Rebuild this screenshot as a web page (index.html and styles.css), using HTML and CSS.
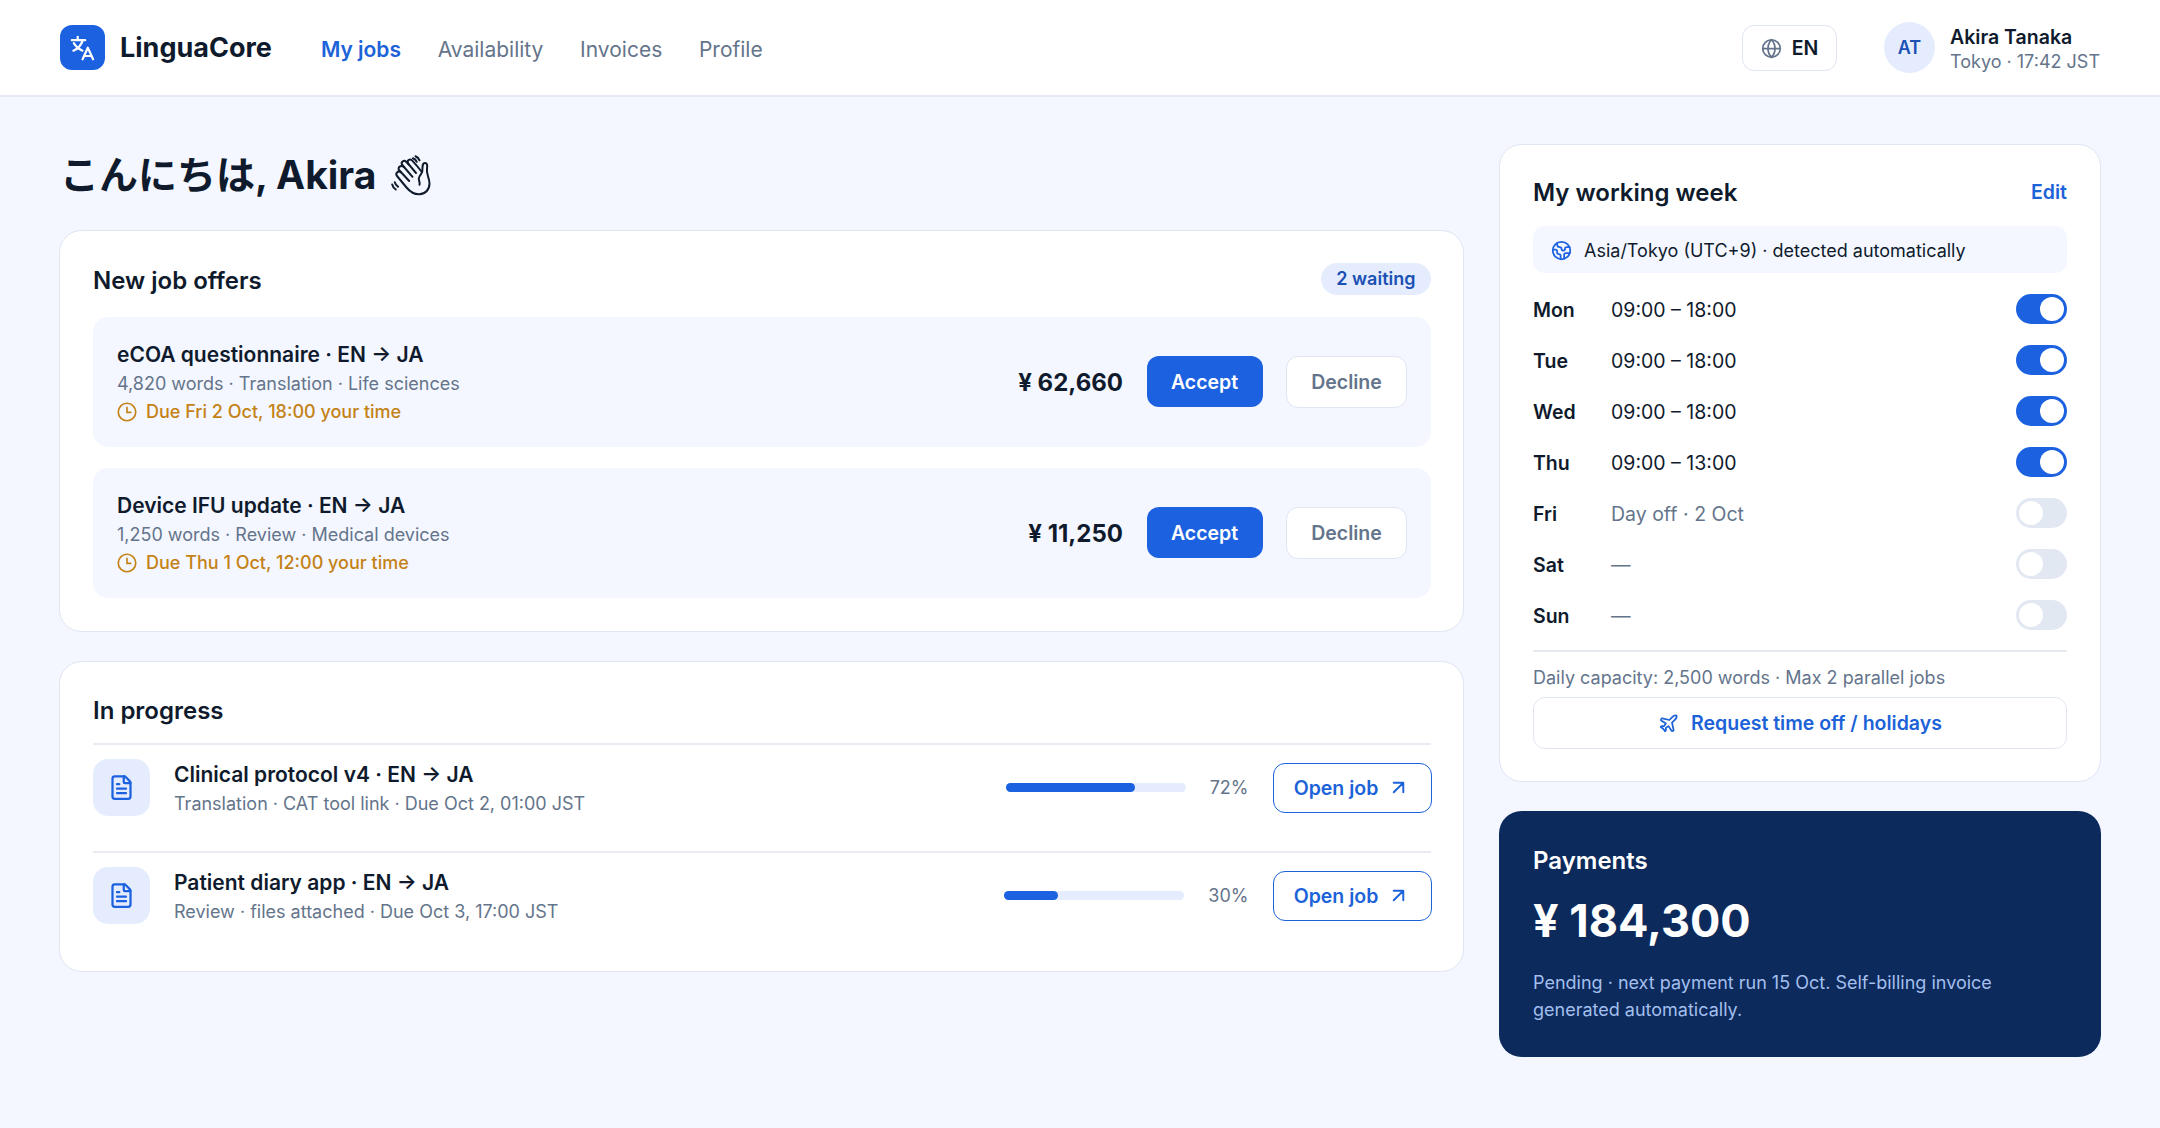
FILE: index.html
```html
<!DOCTYPE html>
<html lang="en">
  <head>
    <meta charset="UTF-8" />
    <meta name="viewport" content="width=device-width, initial-scale=1.0" />
    <title>LinguaCore - My jobs</title>
    <link rel="stylesheet" href="styles.css">
  </head>
  <body>
    <!-- shared icons -->
    <svg class="sprite" aria-hidden="true">
      <symbol id="icon-clock" viewBox="0 0 24 24">
        <circle cx="12" cy="12" r="10.5" />
        <path d="M12 6.5v6h4.5" />
      </symbol>
      <symbol id="icon-file" viewBox="0 0 24 24">
        <path d="M6 22a2 2 0 0 1-2-2V4a2 2 0 0 1 2-2h8a2.4 2.4 0 0 1 1.704.706l3.588 3.588A2.4 2.4 0 0 1 20 8v12a2 2 0 0 1-2 2z" />
        <path d="M14 2v5a1 1 0 0 0 1 1h5M10 9H8M16 13H8M16 17H8" />
      </symbol>
      <symbol id="icon-arrow" viewBox="0 0 24 24">
        <path d="M7 7h10v10M7 17 17 7" />
      </symbol>
    </svg>

    <header class="header">
      <div class="brand">
        <div class="logo">
          <svg viewBox="0 0 45 45">
            <path d="M17.7 11.8v2.6M11.8 15.2h13.4M22.6 15.6c-1.2 4-4.6 8-9.2 10.1M13.8 18.2c2 3.2 5 6 8.6 7.5M22.6 34.3l5.2-11.6 5.3 11.6M24.3 31h7" />
          </svg>
        </div>
        <span class="brand-name">LinguaCore</span>
      </div>
      <nav class="nav">
        <a class="active" href="#">My jobs</a>
        <a href="#">Availability</a>
        <a href="#">Invoices</a>
        <a href="#">Profile</a>
      </nav>
      <button class="lang" type="button">
        <svg class="icon" viewBox="0 0 24 24">
          <circle cx="12" cy="12" r="10" />
          <path d="M12 2a14.5 14.5 0 0 0 0 20 14.5 14.5 0 0 0 0-20M2 12h20" />
        </svg>
        <span>EN</span>
      </button>
      <div class="avatar">AT</div>
      <div class="user">
        <div class="user-name">Akira Tanaka</div>
        <div class="user-time">Tokyo · 17:42 JST</div>
      </div>
    </header>

    <main class="main">
      <div class="col-left">
        <h1 class="greeting">
          <span>こんにちは, Akira</span>
          <svg class="wave" viewBox="0 0 40 41">
            <path d="M30.8 17C27.5 12.5 24 8.5 21 5.4C18.8 3.2 15.3 5.6 17.2 8.6L25 18" />
            <path d="M18 9.7L15.2 6.7C12.8 4.4 9.3 7.2 11.3 10L21.5 21.8" />
            <path d="M13 12.1C10 9.5 6 12.2 8.2 15.3L18.2 26" />
            <path d="M10 17.3C7.5 15 3.8 18 6 21L15.5 32.5C19 36.6 23.5 39.5 28.5 39.3C34.5 39 38.5 34.5 38.5 28.5C38.5 23 35 19 36 13.5C36.6 9.8 36 7.9 34 7.9C31 7.9 31.6 12 31.3 16.5C31 19 28 20.5 27.8 23.5C27.7 26 29.2 27 28.5 29.8" />
            <path d="M24.5 1.2C26.5 2 27.8 3.4 28.5 5.3M22 3.3C23.7 3.9 25 5 25.7 6.8M1.2 29.5C1.7 31.6 2.9 33.3 4.8 34.5M3.8 27.3C4.3 29.2 5.4 30.7 7 31.7" />
          </svg>
        </h1>

        <section class="card offers">
          <div class="card-head">
            <h2>New job offers</h2>
            <span class="badge">2 waiting</span>
          </div>
          <div class="offer">
            <div class="info">
              <h3>eCOA questionnaire · EN → JA</h3>
              <p>4,820 words · Translation · Life sciences</p>
              <div class="due">
                <svg class="icon"><use href="#icon-clock" /></svg>
                <span>Due Fri 2 Oct, 18:00 your time</span>
              </div>
            </div>
            <span class="price">¥ 62,660</span>
            <button class="btn accept" type="button">Accept</button>
            <button class="btn decline" type="button">Decline</button>
          </div>
          <div class="offer">
            <div class="info">
              <h3>Device IFU update · EN → JA</h3>
              <p>1,250 words · Review · Medical devices</p>
              <div class="due">
                <svg class="icon"><use href="#icon-clock" /></svg>
                <span>Due Thu 1 Oct, 12:00 your time</span>
              </div>
            </div>
            <span class="price">¥ 11,250</span>
            <button class="btn accept" type="button">Accept</button>
            <button class="btn decline" type="button">Decline</button>
          </div>
        </section>

        <section class="card progress">
          <h2>In progress</h2>
          <div class="job">
            <div class="file"><svg class="icon"><use href="#icon-file" /></svg></div>
            <div class="info">
              <h3>Clinical protocol v4 · EN → JA</h3>
              <p>Translation · CAT tool link · Due Oct 2, 01:00 JST</p>
            </div>
            <div class="bar"><div class="fill" style="width: 72%"></div></div>
            <span class="percent">72%</span>
            <button class="btn open" type="button">
              <span>Open job</span>
              <svg class="icon"><use href="#icon-arrow" /></svg>
            </button>
          </div>
          <div class="job">
            <div class="file"><svg class="icon"><use href="#icon-file" /></svg></div>
            <div class="info">
              <h3>Patient diary app · EN → JA</h3>
              <p>Review · files attached · Due Oct 3, 17:00 JST</p>
            </div>
            <div class="bar"><div class="fill" style="width: 30%"></div></div>
            <span class="percent">30%</span>
            <button class="btn open" type="button">
              <span>Open job</span>
              <svg class="icon"><use href="#icon-arrow" /></svg>
            </button>
          </div>
        </section>
      </div>

      <div class="col-right">
        <section class="card week">
          <div class="card-head">
            <h2>My working week</h2>
            <a class="edit" href="#">Edit</a>
          </div>
          <div class="timezone">
            <svg class="icon" viewBox="0 0 24 24">
              <circle cx="12" cy="12" r="10" />
              <path d="M21.54 15H17a2 2 0 0 0-2 2v4.54M7 3.34V5a3 3 0 0 0 3 3 2 2 0 0 1 2 2c0 1.1.9 2 2 2a2 2 0 0 0 2-2c0-1.1.9-2 2-2h3.17M11 21.95V18a2 2 0 0 0-2-2 2 2 0 0 1-2-2v-1a2 2 0 0 0-2-2H2.05" />
            </svg>
            <span>Asia/Tokyo (UTC+9) · detected automatically</span>
          </div>
          <div class="days">
            <div class="day"><b>Mon</b><span>09:00 – 18:00</span><i class="toggle on"></i></div>
            <div class="day"><b>Tue</b><span>09:00 – 18:00</span><i class="toggle on"></i></div>
            <div class="day"><b>Wed</b><span>09:00 – 18:00</span><i class="toggle on"></i></div>
            <div class="day"><b>Thu</b><span>09:00 – 13:00</span><i class="toggle on"></i></div>
            <div class="day off"><b>Fri</b><span>Day off · 2 Oct</span><i class="toggle"></i></div>
            <div class="day off"><b>Sat</b><span>—</span><i class="toggle"></i></div>
            <div class="day off"><b>Sun</b><span>—</span><i class="toggle"></i></div>
          </div>
          <p class="capacity">Daily capacity: 2,500 words · Max 2 parallel jobs</p>
          <button class="btn request" type="button">
            <svg class="icon" viewBox="0 0 24 24">
              <path d="M17.8 19.2 16 11l3.5-3.5C21 6 21.5 4 21 3c-1-.5-3 0-4.5 1.5L13 8 4.8 6.2c-.5-.1-.9.1-1.1.5l-.3.5c-.2.5-.1 1 .3 1.3L9 12l-2 3H4l-1 1 3 2 2 3 1-1v-3l3-2 3.5 5.3c.3.4.8.5 1.3.3l.5-.2c.4-.3.6-.7.5-1.2z" />
            </svg>
            <span>Request time off / holidays</span>
          </button>
        </section>

        <section class="payments">
          <h2>Payments</h2>
          <div class="amount">¥ 184,300</div>
          <p>Pending · next payment run 15 Oct. Self-billing invoice generated automatically.</p>
        </section>
      </div>
    </main>
  </body>
</html>
```

FILE: styles.css
```css
* {
  box-sizing: border-box;
}

body {
  margin: 0;
  min-height: 100vh;
  background-color: #f4f7ff;
  color: #0f1b2d;
  font-family: "Inter", "Noto Sans CJK JP", sans-serif;
  font-size: 19.5px;
}

h1,
h2,
h3,
p {
  margin: 0;
}

a {
  text-decoration: none;
}

button {
  font-family: inherit;
}

.sprite {
  display: none;
}

.icon {
  width: 21px;
  height: 21px;
  flex-shrink: 0;
  fill: none;
  stroke: currentColor;
  stroke-width: 2;
  stroke-linecap: round;
  stroke-linejoin: round;
}

/* header */
.header {
  display: flex;
  align-items: center;
  height: 97px;
  padding: 0 60px;
  background-color: #fff;
  border-bottom: 2px solid #e4e9f2;
}

.brand {
  display: flex;
  align-items: center;
  gap: 15px;
}

.logo {
  width: 45px;
  height: 45px;
  border-radius: 12px;
  background-color: #1c62e0;
}

.logo svg {
  display: block;
  fill: none;
  stroke: #fff;
  stroke-width: 2.2;
  stroke-linecap: round;
  stroke-linejoin: round;
}

.brand-name {
  font-size: 27px;
  font-weight: 700;
}

.nav {
  display: flex;
  gap: 36.7px;
  margin-left: 49px;
  padding-top: 3px;
  font-size: 21px;
}

.nav a {
  color: #64748b;
}

.nav .active {
  color: #1c62d8;
  font-weight: 600;
}

.lang {
  display: flex;
  align-items: center;
  justify-content: center;
  gap: 10px;
  width: 95px;
  height: 46px;
  margin-left: auto;
  padding: 1px 0 0;
  border: 1.5px solid #dfe5f1;
  border-radius: 12px;
  background-color: #fff;
  color: #0f1b2d;
  font-size: 19.5px;
  font-weight: 600;
}

.lang .icon {
  color: #64748b;
}

.avatar {
  display: flex;
  align-items: center;
  justify-content: center;
  width: 51px;
  height: 51px;
  margin-left: 47px;
  border-radius: 50%;
  background-color: #e4ecfe;
  color: #1b50b4;
  font-size: 18px;
  font-weight: 600;
}

.user {
  margin-left: 15px;
  padding-top: 3px;
}

.user-name {
  font-size: 19.5px;
  font-weight: 600;
  line-height: 25px;
}

.user-time {
  color: #64748b;
  font-size: 18px;
  line-height: 24px;
}

/* layout */
.main {
  display: grid;
  grid-template-columns: 1fr 601.5px;
  gap: 35px;
  padding: 47px 59.5px 0 59px;
}

.greeting {
  display: flex;
  align-items: center;
  gap: 15px;
  height: 63px;
  margin-bottom: 23px;
  padding-left: 1px;
  font-size: 39px;
  font-weight: 700;
}

.greeting span {
  padding-bottom: 8px;
}

.wave {
  width: 40px;
  height: 41px;
  fill: none;
  stroke: #0f1b2d;
  stroke-width: 2;
  stroke-linecap: round;
  stroke-linejoin: round;
}

.card {
  padding: 32px 32.5px 32px 33px;
  border: 1.5px solid #dfe5f1;
  border-radius: 22.5px;
  background-color: #fff;
}

.card-head {
  display: flex;
  align-items: center;
  justify-content: space-between;
}

h2 {
  font-size: 24px;
  font-weight: 600;
}

h3 {
  font-size: 21px;
  font-weight: 600;
  line-height: 30px;
}

.info {
  flex: 1;
}

.info p {
  color: #64748b;
  font-size: 18px;
  line-height: 28px;
}

.btn {
  display: flex;
  align-items: center;
  justify-content: center;
  padding: 0;
  border-radius: 12px;
  font-size: 19.5px;
  font-weight: 600;
}

/* job offers */
.offers {
  height: 401.5px;
}

.offers .card-head {
  height: 32px;
  margin-bottom: 21.5px;
}

.offers h2 {
  padding-top: 2px;
}

.badge {
  padding: 0 15px;
  border-radius: 16px;
  background-color: #e4ecfe;
  color: #1b50b4;
  font-size: 18px;
  font-weight: 600;
  line-height: 32px;
}

.offer {
  display: flex;
  align-items: center;
  gap: 23.5px;
  height: 130px;
  margin-bottom: 21px;
  padding: 0 23.5px 0 24px;
  border-radius: 15px;
  background-color: #f4f7ff;
}

.offer .info,
.price {
  padding-top: 2px;
}

.due {
  display: flex;
  align-items: center;
  gap: 9px;
  color: #c48216;
  font-size: 18px;
  font-weight: 500;
  line-height: 28px;
}

.due .icon {
  width: 20px;
  height: 20px;
}

.price {
  font-size: 24px;
  font-weight: 700;
}

.accept {
  width: 116px;
  height: 51px;
  border: none;
  background-color: #1c62e0;
  color: #fff;
}

.decline {
  width: 121px;
  height: 52px;
  border: 1.5px solid #dfe5f1;
  background-color: #fff;
  color: #64748b;
}

/* in progress */
.progress {
  height: 311px;
  margin-top: 29.5px;
}

.progress h2 {
  height: 49px;
  line-height: 33px;
}

.job {
  display: flex;
  align-items: center;
  gap: 24px;
  height: 108px;
  padding-bottom: 21px;
  border-top: 2px solid #e8ebf1;
}

.job h3 {
  padding-top: 2px;
}

.file {
  display: flex;
  align-items: center;
  justify-content: center;
  width: 57px;
  height: 57px;
  border-radius: 15px;
  background-color: #e4ecfe;
  color: #1c62e0;
}

.file .icon {
  width: 27px;
  height: 27px;
}

.bar {
  width: 180px;
  height: 9px;
  border-radius: 5px;
  background-color: #e4ecfe;
}

.fill {
  height: 9px;
  border-radius: 5px;
  background-color: #1c62e0;
}

.percent {
  color: #64748b;
  font-size: 18px;
}

.open {
  gap: 9px;
  width: 159px;
  height: 50px;
  margin-right: -1px;
  border: 1.5px solid #1c62d8;
  background-color: #fff;
  color: #1c62d8;
}

.open .icon {
  width: 23px;
  height: 23px;
}

/* working week */
.week {
  height: 638px;
}

.week .card-head {
  height: 30px;
  margin-bottom: 19px;
}

.edit {
  color: #1c62d8;
  font-weight: 600;
}

.timezone {
  display: flex;
  align-items: center;
  gap: 12px;
  height: 47px;
  margin-bottom: 21px;
  padding: 1px 18px 0;
  border-radius: 12px;
  background-color: #f4f7ff;
  font-size: 18px;
}

.timezone .icon {
  color: #1c62e0;
}

.days {
  display: flex;
  flex-direction: column;
  gap: 21px;
  padding-bottom: 20px;
  border-bottom: 2px solid #e4e9f2;
}

.day {
  display: flex;
  align-items: center;
  height: 30px;
}

.day b,
.day span {
  padding-top: 1px;
}

.day b {
  width: 78px;
  font-weight: 600;
}

.day.off span {
  color: #64748b;
}

.toggle {
  width: 51px;
  height: 30px;
  margin-left: auto;
  padding: 3px;
  border-radius: 15px;
  background-color: #e2e8f2;
}

.toggle::before {
  content: "";
  display: block;
  width: 24px;
  height: 24px;
  border-radius: 50%;
  background-color: #fff;
}

.toggle.on {
  background-color: #1c62e0;
}

.toggle.on::before {
  margin-left: auto;
}

.capacity {
  height: 45px;
  padding-top: 12px;
  color: #64748b;
  font-size: 18px;
  line-height: 28px;
}

.request {
  gap: 12px;
  width: 100%;
  height: 52px;
  border: 1.5px solid #dfe5f1;
  background-color: #fff;
  color: #1c62d8;
}

/* payments */
.payments {
  height: 246px;
  margin-top: 29px;
  padding: 33px 34px;
  border-radius: 22.5px;
  background-color: #0c2a5b;
  color: #fff;
}

.payments h2 {
  line-height: 33px;
}

.amount {
  margin: 15px 0 19px;
  font-size: 45px;
  font-weight: 700;
  line-height: 58px;
}

.payments p {
  color: #a3bfee;
  font-size: 18px;
  line-height: 27px;
}
```
